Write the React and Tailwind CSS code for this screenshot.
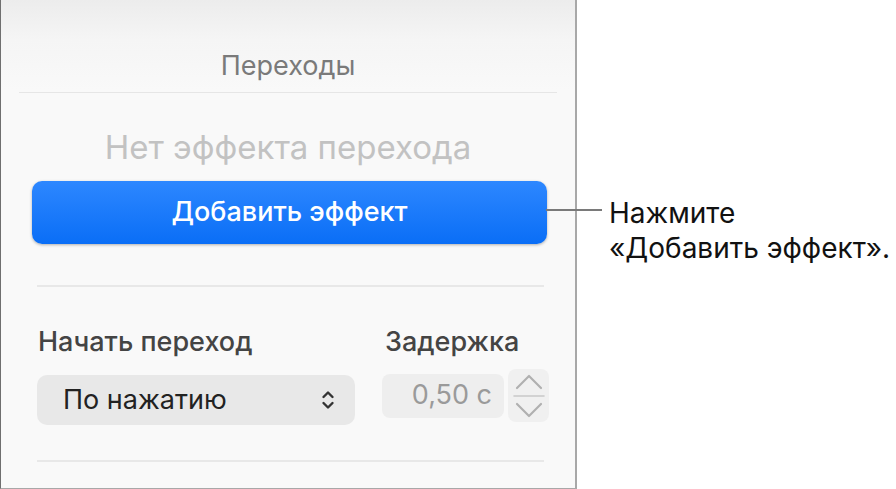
export default function App() {
  return (
    <div className="flex h-[489px] w-[896px] bg-white font-['Inter','Liberation_Sans',sans-serif]">
      <div className="flex h-full w-[577px] shrink-0 flex-col border-l border-r-2 border-b border-l-[#6f6f6f] border-r-[#a8a8a8] border-b-[#a8a8a8] bg-[linear-gradient(to_bottom,#ececec_0px,#f5f5f5_40px,#f9f9f9_90px)]">
        <div className="mt-[50px] text-center text-[27px] leading-[32px] text-[#7a7a7a]">Переходы</div>
        <div className="mx-[18px] mt-[10px] h-px bg-[#e6e6e6]" />
        <div className="mt-[34px] text-center text-[33px] leading-[40px] text-[#c2c2c2]">Нет эффекта перехода</div>
        <button className="ml-[31px] mt-[14px] flex h-[63px] w-[515px] items-center justify-center rounded-[10px] bg-[linear-gradient(to_bottom,#2d87ff,#0a6ef6)] text-[27px] font-medium text-white shadow-[0_1px_3px_rgba(0,0,0,0.3)]">
          Добавить эффект
        </button>
        <div className="ml-[36px] mt-[41px] h-[2px] w-[507px] bg-[#e8e8e8]" />
        <div className="ml-[36px] mt-[38px] flex">
          <div className="flex w-[318px] flex-col">
            <div className="pl-[1px] text-[27px] font-medium leading-[34px] text-[#444]">Начать переход</div>
            <div className="mt-[16px] flex h-[50px] items-center justify-between rounded-[10px] bg-[#e8e8e8] pl-[26px] pr-[20px]">
              <span className="text-[27px] text-[#222]">По нажатию</span>
              <svg width="14" height="24" viewBox="0 0 14 24" fill="none" stroke="#333" strokeWidth="2.4" strokeLinecap="round" strokeLinejoin="round">
                <path d="M2.5 9 7 4.5 11.5 9" />
                <path d="M2.5 15 7 19.5 11.5 15" />
              </svg>
            </div>
          </div>
          <div className="ml-[27px] flex flex-col">
            <div className="pl-[3px] text-[27px] font-medium leading-[34px] text-[#444]">Задержка</div>
            <div className="mt-[10px] flex items-center">
              <div className="flex h-[44px] w-[122px] items-center justify-end rounded-[8px] bg-[#eeeeee] pr-[12px] text-[27px] text-[#9a9a9a]">0,50 с</div>
              <div className="ml-[4px] flex h-[53px] w-[41px] flex-col items-center justify-center rounded-[8px] bg-[#f0f0f0]">
                <svg width="32" height="53" viewBox="0 0 32 53" fill="none" stroke="#b0b0b0" strokeWidth="2.2" strokeLinecap="round" strokeLinejoin="round">
                  <path d="M4 19 16 7 28 19" />
                  <path d="M1 27H31" stroke="#c8c8c8" strokeWidth="1.6" />
                  <path d="M4 35 16 47 28 35" />
                </svg>
              </div>
            </div>
          </div>
        </div>
        <div className="ml-[36px] mt-[35px] h-[2px] w-[507px] bg-[#e8e8e8]" />
      </div>
      <div className="relative flex-1">
        <div className="absolute left-[-31px] top-[209px] h-[2px] w-[56px] bg-[#7a7a7a]" />
        <div className="ml-[32px] mt-[196px] text-[28px] leading-[35px] text-[#111]">
          <div>Нажмите</div>
          <div>«Добавить эффект».</div>
        </div>
      </div>
    </div>
  );
}
